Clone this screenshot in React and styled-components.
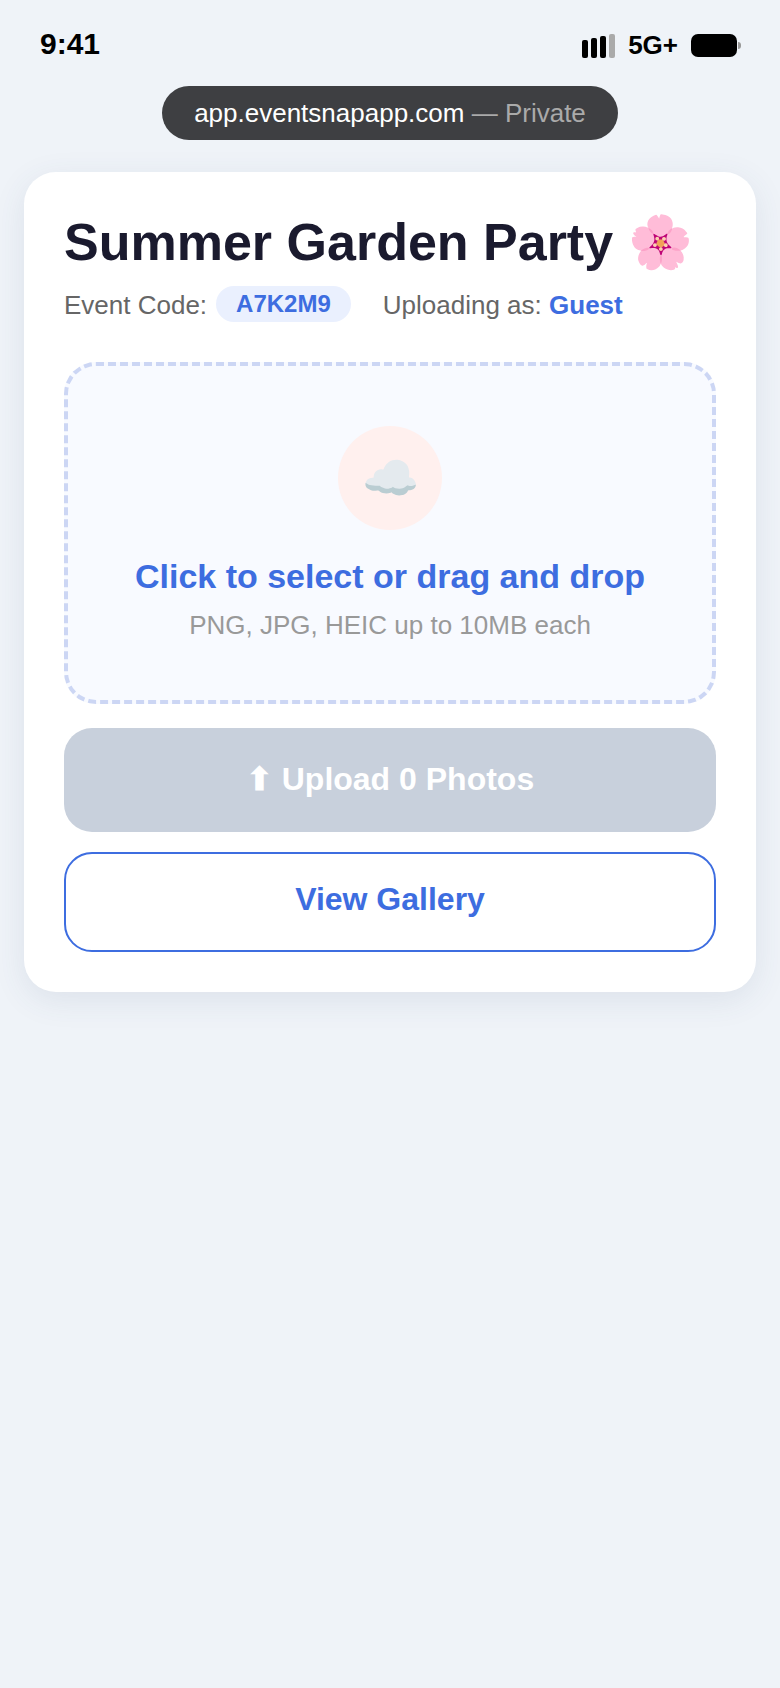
import styled, { createGlobalStyle } from "styled-components";

const GlobalStyle = createGlobalStyle`
  html, body {
    margin: 0;
    padding: 0;
    background: #eff3f8;
  }
  body {
    font-family: "Liberation Sans", Arial, sans-serif;
  }
`;

const Page = styled.div`
  min-height: 1688px;
  background: #eff3f8;
  box-sizing: border-box;
  padding: 0 24px;
`;

const StatusBar = styled.div`
  display: flex;
  justify-content: space-between;
  align-items: center;
  height: 86px;
  padding: 0 16px;
  color: #000;
  font-weight: 700;
`;

const Time = styled.div`
  font-size: 30px;
  margin-top: 1px;
`;

const StatusRight = styled.div`
  display: flex;
  align-items: center;
  gap: 13px;
  font-size: 26px;
  margin-top: 5px;
`;

const Signal = styled.div`
  display: flex;
  align-items: flex-end;
  gap: 3px;
  height: 24px;
`;

const SignalBar = styled.span`
  width: 6px;
  height: ${(p) => p.$h}px;
  border-radius: 2px;
  background: ${(p) => (p.$off ? "#aaa" : "#000")};
`;

const Battery = styled.div`
  position: relative;
  width: 46px;
  height: 23px;
  border-radius: 7px;
  background: #000;
  margin-right: 3px;

  &::after {
    content: "";
    position: absolute;
    right: -4px;
    top: 8px;
    width: 3px;
    height: 7px;
    border-radius: 0 3px 3px 0;
    background: #999;
  }
`;

const UrlRow = styled.div`
  display: flex;
  justify-content: center;
`;

const UrlPill = styled.div`
  height: 54px;
  padding: 0 32px;
  border-radius: 27px;
  background: #3e3f42;
  color: #fff;
  font-size: 26px;
  line-height: 54px;
`;

const Muted = styled.span`
  color: #aaa;
`;

const Card = styled.div`
  margin-top: 32px;
  background: #fff;
  border-radius: 32px;
  padding: 40px;
  box-shadow: 0 8px 32px rgba(60, 80, 120, 0.1);
`;

const Title = styled.h1`
  margin: 0;
  font-size: 52px;
  line-height: 60px;
  font-weight: 700;
  color: #1a1a2e;
  white-space: nowrap;
`;

const Meta = styled.div`
  display: flex;
  align-items: center;
  margin-top: 16px;
  font-size: 26px;
  color: #666;
`;

const MetaGroup = styled.span`
  display: inline-flex;
  align-items: center;
  gap: 9px;
  margin-right: 32px;
`;

const CodeBadge = styled.span`
  padding: 0 20px;
  height: 36px;
  line-height: 36px;
  margin-top: -2px;
  border-radius: 18px;
  background: #eaf0fe;
  color: #3d6de0;
  font-weight: 700;
  font-size: 24px;
`;

const Guest = styled.strong`
  color: #3d6de0;
  font-weight: 700;
`;

const DropZone = styled.div`
  margin-top: 40px;
  height: 342px;
  box-sizing: border-box;
  border: 4px dashed #ccd6f4;
  border-radius: 32px;
  background: #f8faff;
  display: flex;
  flex-direction: column;
  align-items: center;
  padding-top: 60px;
`;

const CloudCircle = styled.div`
  width: 104px;
  height: 104px;
  border-radius: 50%;
  background: #fff0ee;
  display: flex;
  align-items: center;
  justify-content: center;
  font-size: 46px;
`;

const DropTitle = styled.div`
  margin-top: 25px;
  font-size: 34px;
  line-height: 42px;
  font-weight: 700;
  color: #3d6de0;
`;

const DropHint = styled.div`
  margin-top: 11px;
  font-size: 26px;
  line-height: 34px;
  color: #999;
`;

const UploadButton = styled.button`
  display: block;
  width: 100%;
  height: 104px;
  margin-top: 24px;
  padding: 0 0 2px;
  border: 0;
  border-radius: 28px;
  background: #c8d0dc;
  color: #fff;
  font-family: inherit;
  font-size: 32px;
  font-weight: 700;
`;

const GalleryButton = styled.button`
  display: block;
  width: 100%;
  height: 100px;
  margin-top: 20px;
  padding: 0 0 6px;
  border: 2px solid #3d6de0;
  border-radius: 28px;
  background: #fff;
  color: #3d6de0;
  font-family: inherit;
  font-size: 32px;
  font-weight: 700;
`;

export default function App() {
  return (
    <>
      <GlobalStyle />
      <Page>
        <StatusBar>
          <Time>9:41</Time>
          <StatusRight>
            <Signal>
              <SignalBar $h={18} />
              <SignalBar $h={20} />
              <SignalBar $h={22} />
              <SignalBar $h={24} $off />
            </Signal>
            <span>5G+</span>
            <Battery />
          </StatusRight>
        </StatusBar>
        <UrlRow>
          <UrlPill>
            app.eventsnapapp.com <Muted>— Private</Muted>
          </UrlPill>
        </UrlRow>
        <Card>
          <Title>Summer Garden Party 🌸</Title>
          <Meta>
            <MetaGroup>
              Event Code: <CodeBadge>A7K2M9</CodeBadge>
            </MetaGroup>
            <span>
              Uploading as: <Guest>Guest</Guest>
            </span>
          </Meta>
          <DropZone>
            <CloudCircle>☁️</CloudCircle>
            <DropTitle>Click to select or drag and drop</DropTitle>
            <DropHint>PNG, JPG, HEIC up to 10MB each</DropHint>
          </DropZone>
          <UploadButton>⬆ Upload 0 Photos</UploadButton>
          <GalleryButton>View Gallery</GalleryButton>
        </Card>
      </Page>
    </>
  );
}
